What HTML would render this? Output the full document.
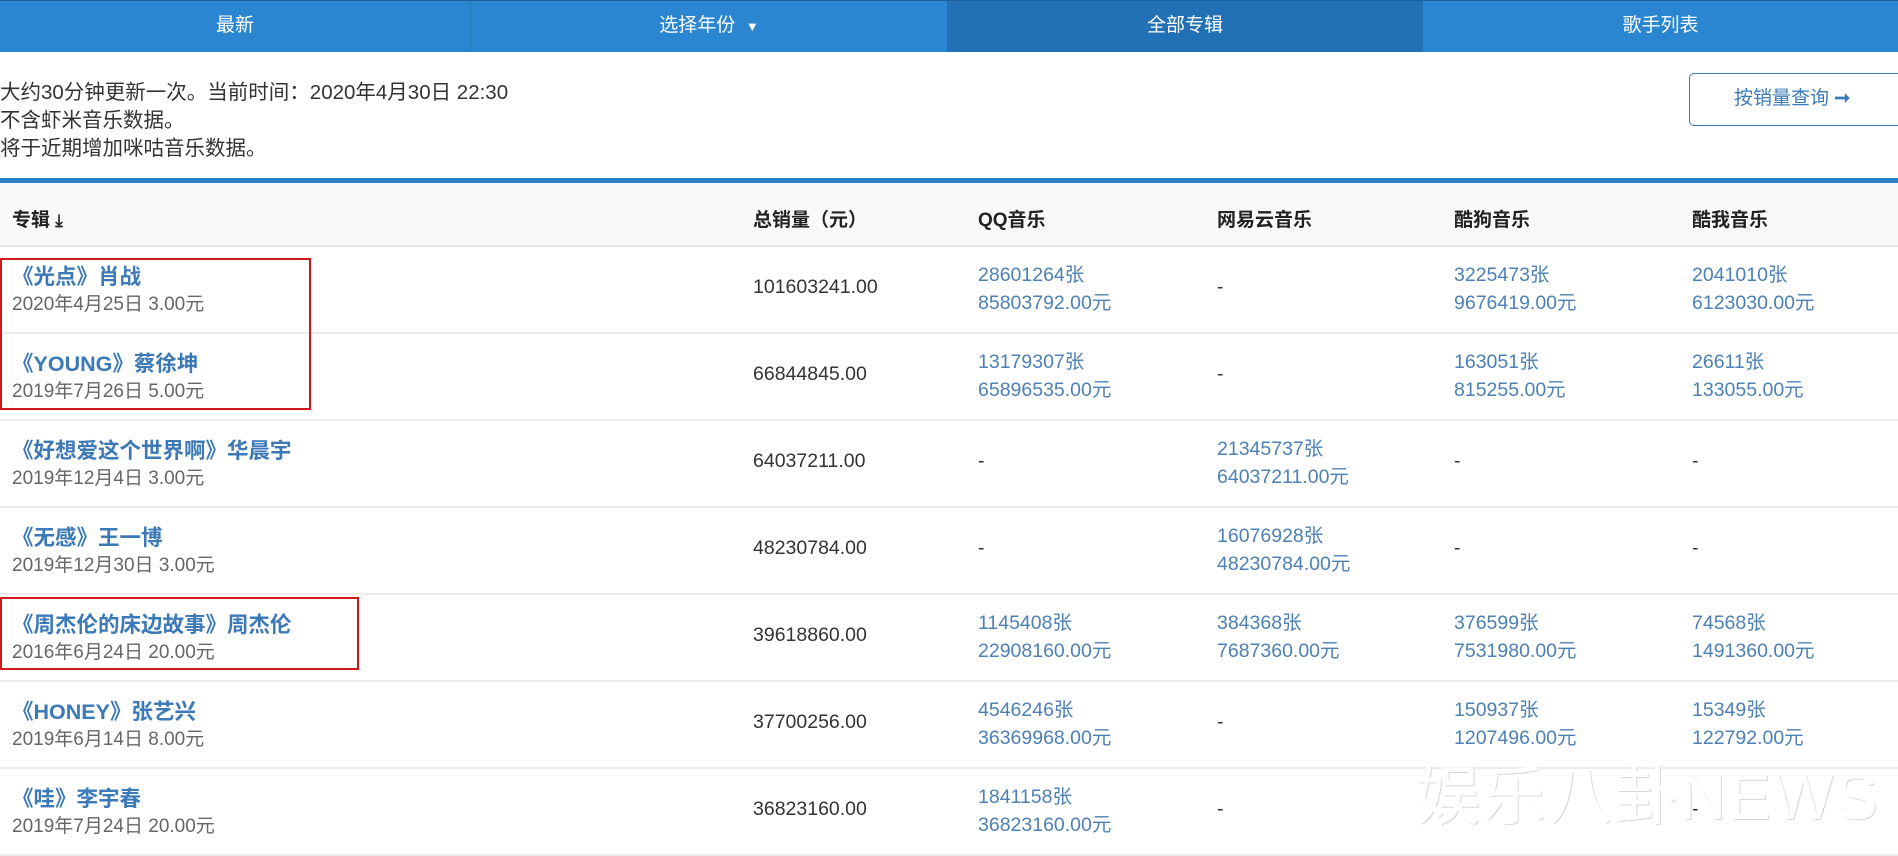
<!DOCTYPE html>
<html><head><meta charset="utf-8"><style>
*{margin:0;padding:0;box-sizing:border-box}
body{width:1898px;height:856px;overflow:hidden;background:#fff;font-family:"Liberation Sans","Noto Sans CJK SC",sans-serif;position:relative;color:#333}
.nav{position:absolute;top:0;left:0;width:1898px;height:52px;background:#2a86d1;border-top:1px solid #1b5e99}
.tab{position:absolute;top:0;height:51px;line-height:49px;text-align:center;color:#fff;font-size:19px}
.a{position:absolute;white-space:nowrap}
.info{font-size:20.5px;color:#333;left:0}
.btn{position:absolute;left:1689px;top:73px;width:215px;height:53px;border:1.5px solid #3a7ab8;border-radius:5px;color:#3a7ab8;font-size:19px;line-height:50px;padding-left:44px}
.hdr{position:absolute;top:178px;left:0;width:1898px;height:69px;background:#f7f9fa;border-top:5px solid #2a80c8;border-bottom:2px solid #e6e6e6}
.h{position:absolute;top:22px;font-size:19px;font-weight:bold;color:#222}
.row{position:absolute;left:0;width:1898px;height:87px;border-bottom:2px solid #ececec}
.t{position:absolute;left:12px;top:13px;font-size:21.5px;font-weight:bold;color:#3b79b7;white-space:nowrap}
.s{position:absolute;left:12px;top:42px;font-size:19px;color:#666;white-space:nowrap}
.v{position:absolute;top:29px;font-size:19.5px;color:#333}
.b{position:absolute;top:14px;font-size:19.5px;color:#4d80b5;line-height:28px;white-space:nowrap}
.red{position:absolute;border:2.5px solid #d0191f}
</style></head><body>
<div class="nav">
<div class="tab" style="left:0;width:470px">最新</div>
<div class="tab" style="left:470px;width:477px;border-left:1px solid #2679bd">选择年份 &nbsp;<span style="font-size:13px">▼</span></div>
<div class="tab" style="left:947px;width:476px;background:#2271b6">全部专辑</div>
<div class="tab" style="left:1423px;width:475px">歌手列表</div>
</div>
<div class="a info" style="top:75px">大约30分钟更新一次。当前时间：2020年4月30日 22:30</div>
<div class="a info" style="top:103px">不含虾米音乐数据。</div>
<div class="a info" style="top:131px">将于近期增加咪咕音乐数据。</div>
<div class="btn">按销量查询 <b>➞</b></div>
<div class="hdr">
<div class="h" style="left:12px">专辑 <span style="font-size:17px">⤓</span></div>
<div class="h" style="left:753px">总销量（元）</div>
<div class="h" style="left:978px">QQ音乐</div>
<div class="h" style="left:1217px">网易云音乐</div>
<div class="h" style="left:1454px">酷狗音乐</div>
<div class="h" style="left:1692px">酷我音乐</div>
</div>

<div class="row" style="top:247px"><div class="t">《光点》肖战</div><div class="s">2020年4月25日 3.00元</div><div class="v" style="left:753px">101603241.00</div><div class="b" style="left:978px">28601264张<br>85803792.00元</div><div class="v" style="left:1217px">-</div><div class="b" style="left:1454px">3225473张<br>9676419.00元</div><div class="b" style="left:1692px">2041010张<br>6123030.00元</div></div>
<div class="row" style="top:334px"><div class="t">《YOUNG》蔡徐坤</div><div class="s">2019年7月26日 5.00元</div><div class="v" style="left:753px">66844845.00</div><div class="b" style="left:978px">13179307张<br>65896535.00元</div><div class="v" style="left:1217px">-</div><div class="b" style="left:1454px">163051张<br>815255.00元</div><div class="b" style="left:1692px">26611张<br>133055.00元</div></div>
<div class="row" style="top:421px"><div class="t">《好想爱这个世界啊》华晨宇</div><div class="s">2019年12月4日 3.00元</div><div class="v" style="left:753px">64037211.00</div><div class="v" style="left:978px">-</div><div class="b" style="left:1217px">21345737张<br>64037211.00元</div><div class="v" style="left:1454px">-</div><div class="v" style="left:1692px">-</div></div>
<div class="row" style="top:508px"><div class="t">《无感》王一博</div><div class="s">2019年12月30日 3.00元</div><div class="v" style="left:753px">48230784.00</div><div class="v" style="left:978px">-</div><div class="b" style="left:1217px">16076928张<br>48230784.00元</div><div class="v" style="left:1454px">-</div><div class="v" style="left:1692px">-</div></div>
<div class="row" style="top:595px"><div class="t">《周杰伦的床边故事》周杰伦</div><div class="s">2016年6月24日 20.00元</div><div class="v" style="left:753px">39618860.00</div><div class="b" style="left:978px">1145408张<br>22908160.00元</div><div class="b" style="left:1217px">384368张<br>7687360.00元</div><div class="b" style="left:1454px">376599张<br>7531980.00元</div><div class="b" style="left:1692px">74568张<br>1491360.00元</div></div>
<div class="row" style="top:682px"><div class="t">《HONEY》张艺兴</div><div class="s">2019年6月14日 8.00元</div><div class="v" style="left:753px">37700256.00</div><div class="b" style="left:978px">4546246张<br>36369968.00元</div><div class="v" style="left:1217px">-</div><div class="b" style="left:1454px">150937张<br>1207496.00元</div><div class="b" style="left:1692px">15349张<br>122792.00元</div></div>
<div class="row" style="top:769px"><div class="t">《哇》李宇春</div><div class="s">2019年7月24日 20.00元</div><div class="v" style="left:753px">36823160.00</div><div class="b" style="left:978px">1841158张<br>36823160.00元</div><div class="v" style="left:1217px">-</div><div class="v" style="left:1454px">-</div><div class="v" style="left:1692px">-</div></div>

<div class="red" style="left:0;top:258px;width:311px;height:152px"></div>
<div class="red" style="left:0;top:597px;width:359px;height:73px"></div>
<div class="a" style="left:1416px;top:746px;font-size:64px;color:#fff;text-shadow:1px 1px 0 #d8d8d8;letter-spacing:2px">娱乐八卦NEWS</div>
</body></html>
